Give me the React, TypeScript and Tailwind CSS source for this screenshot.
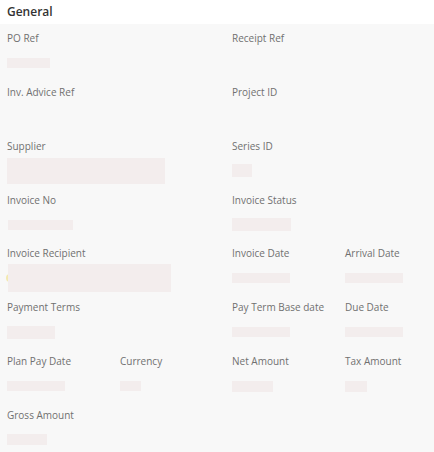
import React from "react";

type Field = {
  label: string;
  span?: number;
  bar?: number;
  barH?: number;
  inset?: boolean;
  dot?: boolean;
};

const rows: Field[][] = [
  [
    { label: "PO Ref", span: 2, bar: 43 },
    { label: "Receipt Ref", span: 2 },
  ],
  [
    { label: "Inv. Advice Ref", span: 2 },
    { label: "Project ID", span: 2 },
  ],
  [
    { label: "Supplier", span: 2, bar: 158, barH: 26 },
    { label: "Series ID", span: 2, bar: 20, barH: 13 },
  ],
  [
    { label: "Invoice No", span: 2, bar: 65, inset: true },
    { label: "Invoice Status", span: 2, bar: 59, barH: 13 },
  ],
  [
    { label: "Invoice Recipient", span: 2, bar: 163, barH: 28, inset: true, dot: true },
    { label: "Invoice Date", bar: 58 },
    { label: "Arrival Date", bar: 58 },
  ],
  [
    { label: "Payment Terms", span: 2, bar: 48, barH: 13 },
    { label: "Pay Term Base date", bar: 58 },
    { label: "Due Date", bar: 58 },
  ],
  [
    { label: "Plan Pay Date", bar: 58 },
    { label: "Currency", bar: 21 },
    { label: "Net Amount", bar: 41, barH: 11 },
    { label: "Tax Amount", bar: 22, barH: 11 },
  ],
  [{ label: "Gross Amount", span: 2, bar: 40, barH: 11 }],
];

function Cell({ f }: { f: Field }) {
  const span = f.span === 2 ? "col-span-2" : "col-span-1";
  return (
    <div className={`${span} flex flex-col`}>
      <div className="h-4 leading-4 pl-px text-[10px] text-[#707070] whitespace-nowrap">
        {f.label}
      </div>
      <div className="relative mt-1 h-[26px] flex items-center pr-2">
        {f.dot && (
          <span className="absolute left-0 top-[9px] h-2 w-2 rounded-full bg-[#f3e9b0]" />
        )}
        {f.bar ? (
          <div
            className={`relative shrink-0 bg-[#f3eded] ${f.inset ? "ml-[2px]" : "ml-px"}`}
            style={{ width: f.bar, height: f.barH ?? 10 }}
          />
        ) : null}
      </div>
    </div>
  );
}

export default function App() {
  return (
    <div
      className="w-[434px] h-[452px] overflow-hidden bg-[#f8f8f8]"
      style={{ fontFamily: '"Open Sans", "Noto Sans", sans-serif' }}
    >
      <div className="h-6 bg-white px-[7px] flex items-center">
        <h2 className="text-[12px] font-semibold text-[#333]">General</h2>
      </div>
      <div className="pt-[6px] pl-[6px]">
        <div className="grid w-[450px] grid-cols-[113px_112px_113px_112px] gap-y-[7.85px]">
          {rows.map((r, i) => (
            <React.Fragment key={i}>
              {r.map((f) => (
                <Cell key={f.label} f={f} />
              ))}
            </React.Fragment>
          ))}
        </div>
      </div>
    </div>
  );
}
